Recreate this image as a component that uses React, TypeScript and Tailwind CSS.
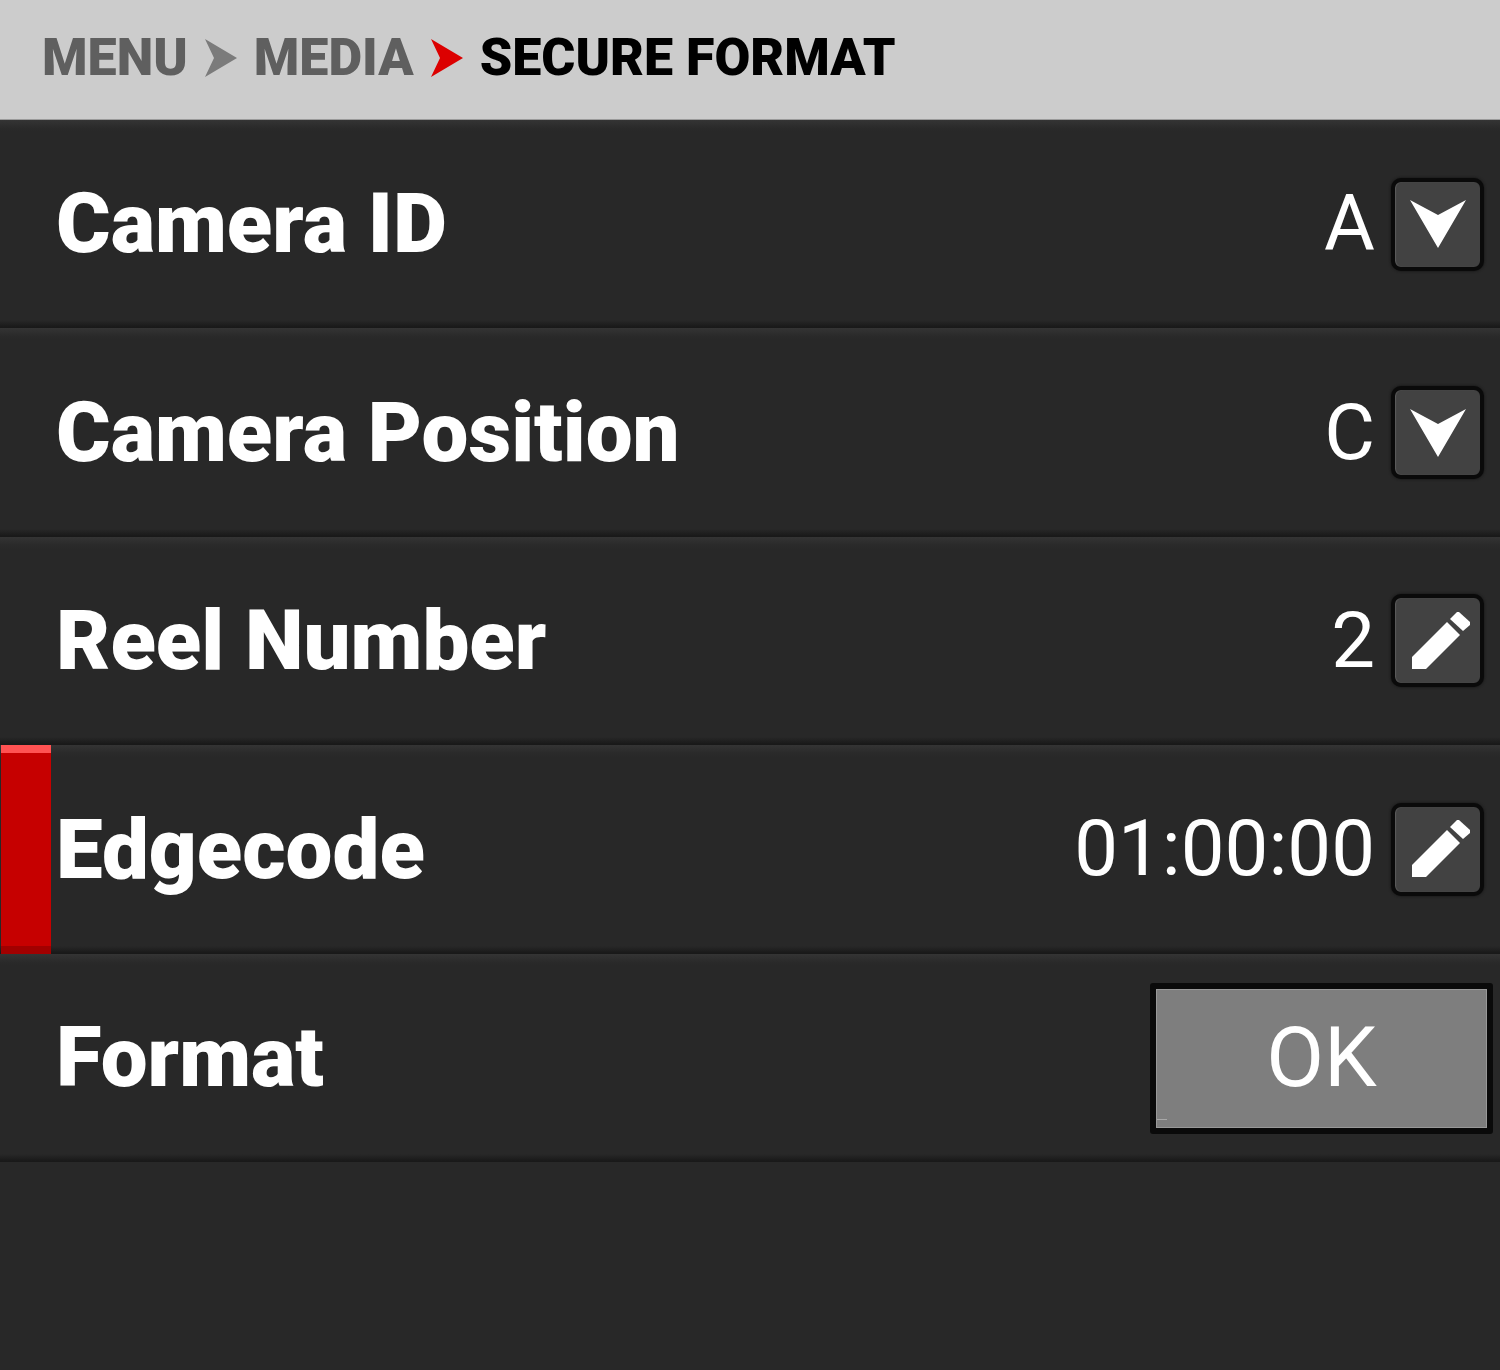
import React from "react";

const Chevron = ({ color }: { color: string }) => (
  <svg width="34" height="38" viewBox="0 0 34 38" className="flex-none">
    <polygon points="1,0 33,19 1,38 10,19" fill={color} />
  </svg>
);

const DownIcon = () => (
  <svg width="58" height="50" viewBox="0 0 58 50">
    <polygon points="1,1 29,16 57,1 29,49" fill="#fff" />
  </svg>
);

const PencilIcon = () => (
  <svg width="60" height="60" viewBox="0 0 60 60" className="translate-x-[3px]">
    <polygon points="1,58 1,46 36,11 49,24 15,58" fill="#fff" />
    <polygon points="39,8 46,1 48,1 59,11 59,14 52,20" fill="#fff" />
  </svg>
);

const IconButton = ({ kind }: { kind: "down" | "edit" }) => (
  <div className="flex-none w-[93px] h-[93px] rounded-[10px] border-[4px] border-[#0a0a0a] bg-[#424242] shadow-[0_0_3px_#111,inset_1px_0_1px_#5c5c5c] flex items-center justify-center">
    {kind === "down" ? <DownIcon /> : <PencilIcon />}
  </div>
);

const Row = ({
  label,
  active,
  children,
}: {
  label: string;
  active?: boolean;
  children?: React.ReactNode;
}) => (
  <div className="h-[208.4px] flex items-stretch bg-[linear-gradient(to_bottom,#343434_0px,#2a2a2a_8px,#282828_12px,#282828_calc(100%-8px),#191919_calc(100%-1px))]">
    <div
      className={
        active
          ? "flex-none w-[50px] ml-[1px] flex flex-col bg-[#c60000]"
          : "flex-none w-[50px] ml-[1px]"
      }
    >
      {active && (
        <>
          <div className="h-[8px] bg-[#ff5252]" />
          <div className="flex-1" />
          <div className="h-[8px] bg-[#a10000]" />
        </>
      )}
    </div>
    <div className="flex-1 flex items-center justify-between pl-[5px]">
      <span className="text-[83.4px] leading-none font-black text-white">{label}</span>
      {children}
    </div>
  </div>
);

const Value = ({ value, kind }: { value: string; kind: "down" | "edit" }) => (
  <div className="flex items-center gap-[16px] pr-[16px]">
    <span className="text-[78px] leading-none font-normal text-white">{value}</span>
    <IconButton kind={kind} />
  </div>
);

export default function App() {
  return (
    <div className="w-[1500px] h-[1370px] overflow-hidden bg-[#282828] font-['Roboto',sans-serif]">
      <header className="h-[120px] bg-[#cccccc] border-b border-[#9a9a9a] flex items-center pl-[42px] pb-[4px] text-[52px] leading-none font-black">
        <span className="text-[#5f5f5f]">MENU</span>
        <span className="ml-[16px] mr-[16px] flex"><Chevron color="#7b7b7b" /></span>
        <span className="text-[#5f5f5f]">MEDIA</span>
        <span className="ml-[16px] mr-[16px] flex"><Chevron color="#dc0000" /></span>
        <span className="text-black">SECURE FORMAT</span>
      </header>
      <main>
        <Row label="Camera ID"><Value value="A" kind="down" /></Row>
        <Row label="Camera Position"><Value value="C" kind="down" /></Row>
        <Row label="Reel Number"><Value value="2" kind="edit" /></Row>
        <Row label="Edgecode" active><Value value="01:00:00" kind="edit" /></Row>
        <Row label="Format">
          <div className="relative mr-[7px] mt-[1px] w-[343px] h-[151px] rounded-[3px] border-[6px] border-[#0a0a0a] bg-[#7e7e7e] shadow-[inset_0_0_0_1px_#989898] flex items-center justify-center">
            <span className="text-[84px] leading-none font-normal text-white">OK</span>
            <div className="absolute left-[1px] bottom-[8px] w-[10px] h-[1px] bg-[#a8a8a8]" />
          </div>
        </Row>
      </main>
    </div>
  );
}
